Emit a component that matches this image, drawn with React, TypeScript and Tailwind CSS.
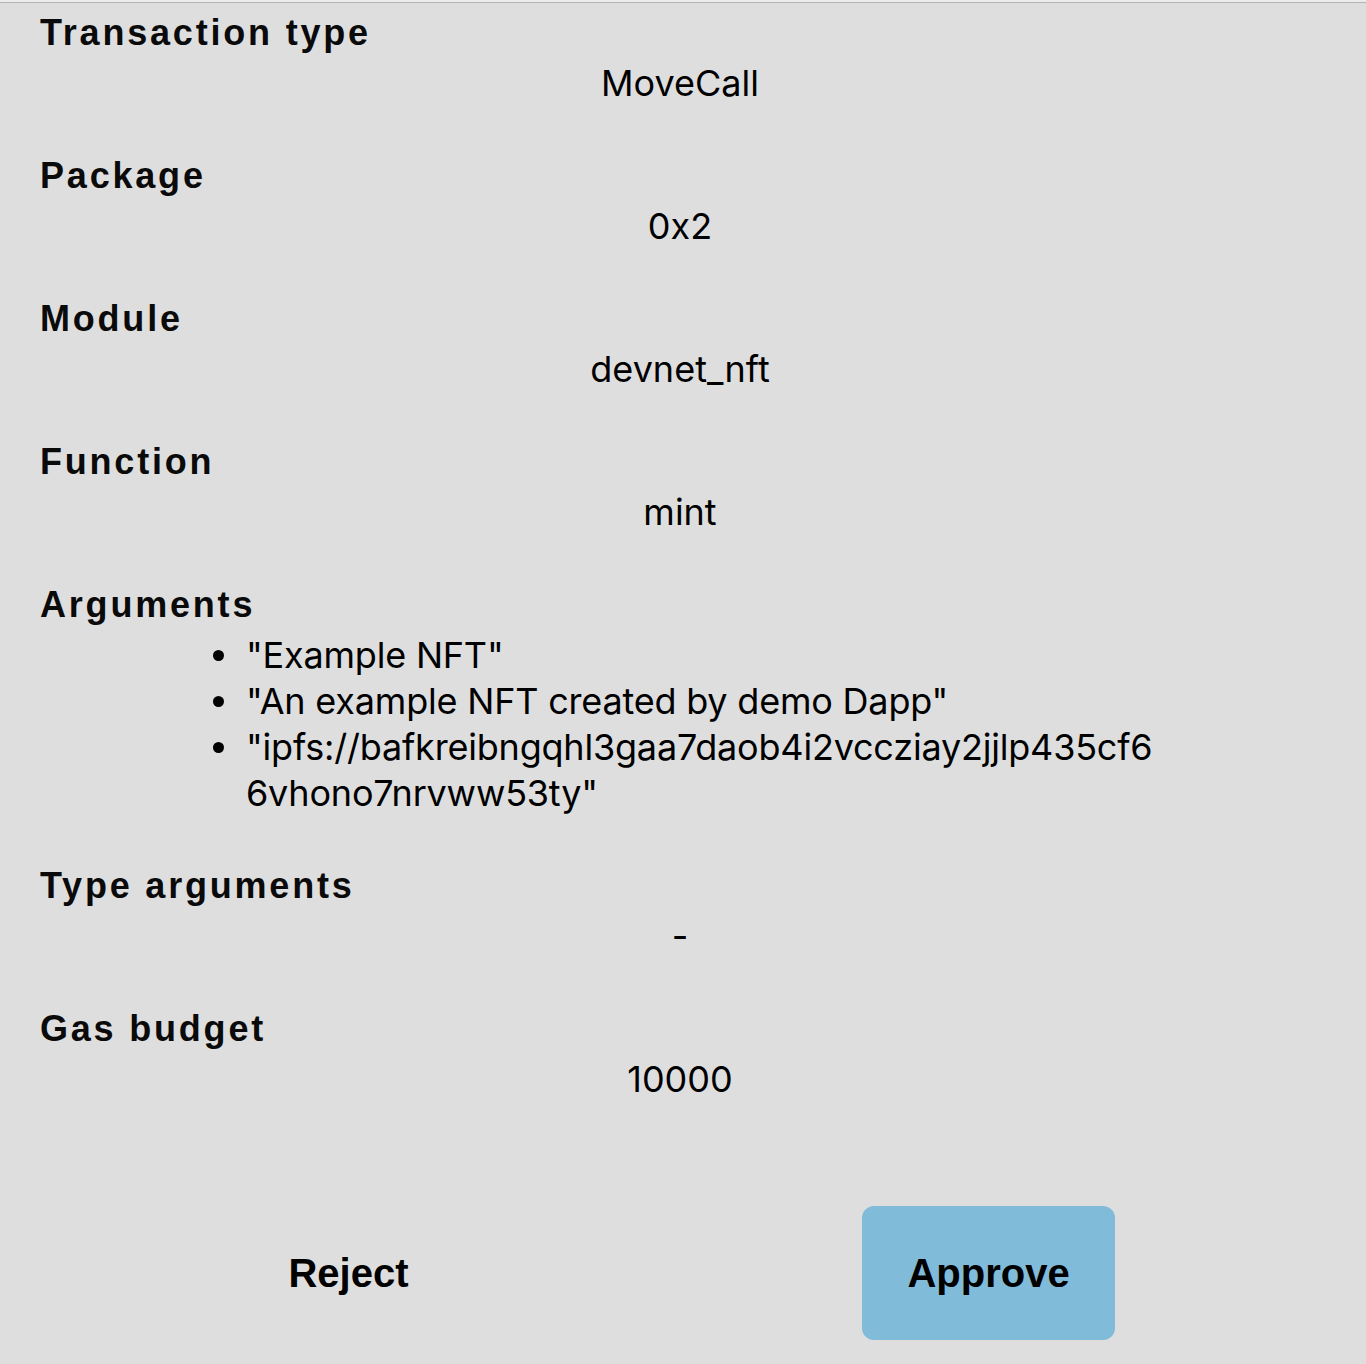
import React from 'react';

const label = "h-[44px] leading-[44px] pl-[40px] text-[36px] font-bold tracking-[2.8px] text-[#0a0a0a]";
const value = "mt-[5px] h-[46px] leading-[46px] text-center text-[36px] text-black";

const Section = ({ title, children }: { title: string; children: React.ReactNode }) => (
  <div className="mb-[48px]">
    <div className={label} style={{ fontFamily: '"Liberation Sans", Arial, sans-serif' }}>
      {title}
    </div>
    {children}
  </div>
);

export default function App() {
  const args = [
    '"Example NFT"',
    '"An example NFT created by demo Dapp"',
    '"ipfs://bafkreibngqhl3gaa7daob4i2vccziay2jjlp435cf66vhono7nrvww53ty"',
  ];

  return (
    <div className="w-[1366px] min-h-[1364px] bg-[#ececec] pt-[2px]">
      <div
        className="min-h-[1362px] border-t border-[#b4b4b4] bg-[#dedede] pr-[6px] pt-[8px]"
        style={{ fontFamily: 'Inter, "Noto Sans", sans-serif' }}
      >
        <Section title="Transaction type">
          <div className={value}>MoveCall</div>
        </Section>
        <Section title="Package">
          <div className={value}>0x2</div>
        </Section>
        <Section title="Module">
          <div className={value}>devnet_nft</div>
        </Section>
        <Section title="Function">
          <div className={value}>mint</div>
        </Section>
        <Section title="Arguments">
          <ul className="mt-[5px] ml-[213px] text-[36px] leading-[46px] text-black tracking-[-0.2px]">
            {args.map((a) => (
              <li key={a} className="flex items-start">
                <span className="flex h-[46px] w-[33px] shrink-0 items-center">
                  <span className="h-[11px] w-[11px] rounded-full bg-black" />
                </span>
                <span className="w-[915px] break-all">{a}</span>
              </li>
            ))}
          </ul>
        </Section>
        <Section title="Type arguments">
          <div className={value}>-</div>
        </Section>
        <Section title="Gas budget">
          <div className={value}>10000</div>
        </Section>

        <div
          className="mt-[104px] flex items-center pb-[24px]"
          style={{ fontFamily: '"Liberation Sans", Arial, sans-serif' }}
        >
          <button className="ml-[222px] h-[134px] w-[253px] text-[40px] font-bold text-black">
            Reject
          </button>
          <button className="ml-[387px] h-[134px] w-[253px] rounded-[12px] bg-[#80bbda] text-[40px] font-bold text-black">
            Approve
          </button>
        </div>
      </div>
    </div>
  );
}
